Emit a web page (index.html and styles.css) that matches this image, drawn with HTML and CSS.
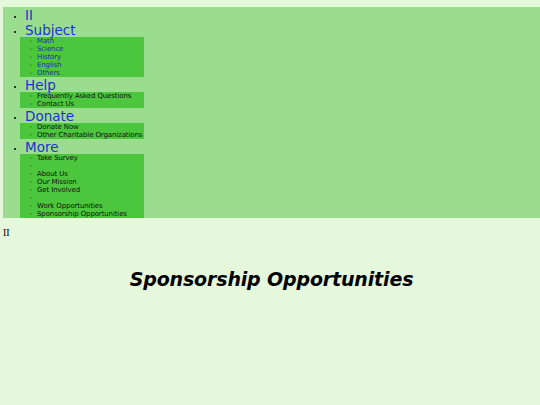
FILE: index.html
```html
<!DOCTYPE html>
<html>
<head>
<meta charset="utf-8">
<link rel="stylesheet" href="styles.css">
</head>
<body>
<nav class="nav">
  <ul class="menu">
    <li><a href="#">II</a></li>
    <li><a href="#">Subject</a>
      <ul class="sub">
        <li><a href="#">Math</a></li>
        <li><a href="#">Science</a></li>
        <li><a href="#">History</a></li>
        <li><a href="#">English</a></li>
        <li><a href="#">Others</a></li>
      </ul>
    </li>
    <li><a href="#">Help</a>
      <ul class="sub">
        <li>Frequently Asked Questions</li>
        <li>Contact Us</li>
      </ul>
    </li>
    <li><a href="#">Donate</a>
      <ul class="sub">
        <li>Donate Now</li>
        <li>Other Charitable Organizations</li>
      </ul>
    </li>
    <li><a href="#">More</a>
      <ul class="sub">
        <li>Take Survey</li>
        <li></li>
        <li>About Us</li>
        <li>Our Mission</li>
        <li>Get Involved</li>
        <li></li>
        <li>Work Opportunities</li>
        <li>Sponsorship Opportunities</li>
      </ul>
    </li>
  </ul>
</nav>
<p class="crumb">II</p>
<h1 class="title">Sponsorship Opportunities</h1>
</body>
</html>
```
FILE: styles.css
```css
html, body {
  background: #e6f8dc;
}
body {
  margin: 0 0 0 3px;
  padding-top: 7px;
  font-family: "Liberation Serif", serif;
}
.nav {
  background: #9bdd8f;
}
.menu {
  margin: 0;
  padding: 0 0 0 22px;
  list-style: disc;
  font-family: "DejaVu Sans", sans-serif;
  font-size: 13.5px;
  line-height: 15px;
}
.menu > li::marker {
  font-size: 8px;
}
.menu > li > a {
  position: relative;
  top: 1px;
}
.menu a {
  color: #1a33cc;
  text-decoration: none;
}
.sub {
  margin: 0 0 0 -5px;
  padding: 0 0 0 17px;
  width: 107px;
  background: #4cc73d;
  list-style: circle;
  font-size: 7px;
  line-height: 8px;
  letter-spacing: -0.12px;
  white-space: nowrap;
  color: #111;
}
.sub > li::marker {
  content: "\25E6\00a0\00a0";
  font-size: 7px;
  color: #1e3a18;
}
.sub a {
  color: #1a2fa8;
}
.crumb {
  margin: 9px 0 0;
  font-size: 10px;
  line-height: 12px;
}
.title {
  margin: 28px 0 0;
  text-align: center;
  font-family: "DejaVu Sans", sans-serif;
  font-style: italic;
  font-weight: bold;
  font-size: 19px;
  line-height: 24px;
  letter-spacing: -0.15px;
}
```
